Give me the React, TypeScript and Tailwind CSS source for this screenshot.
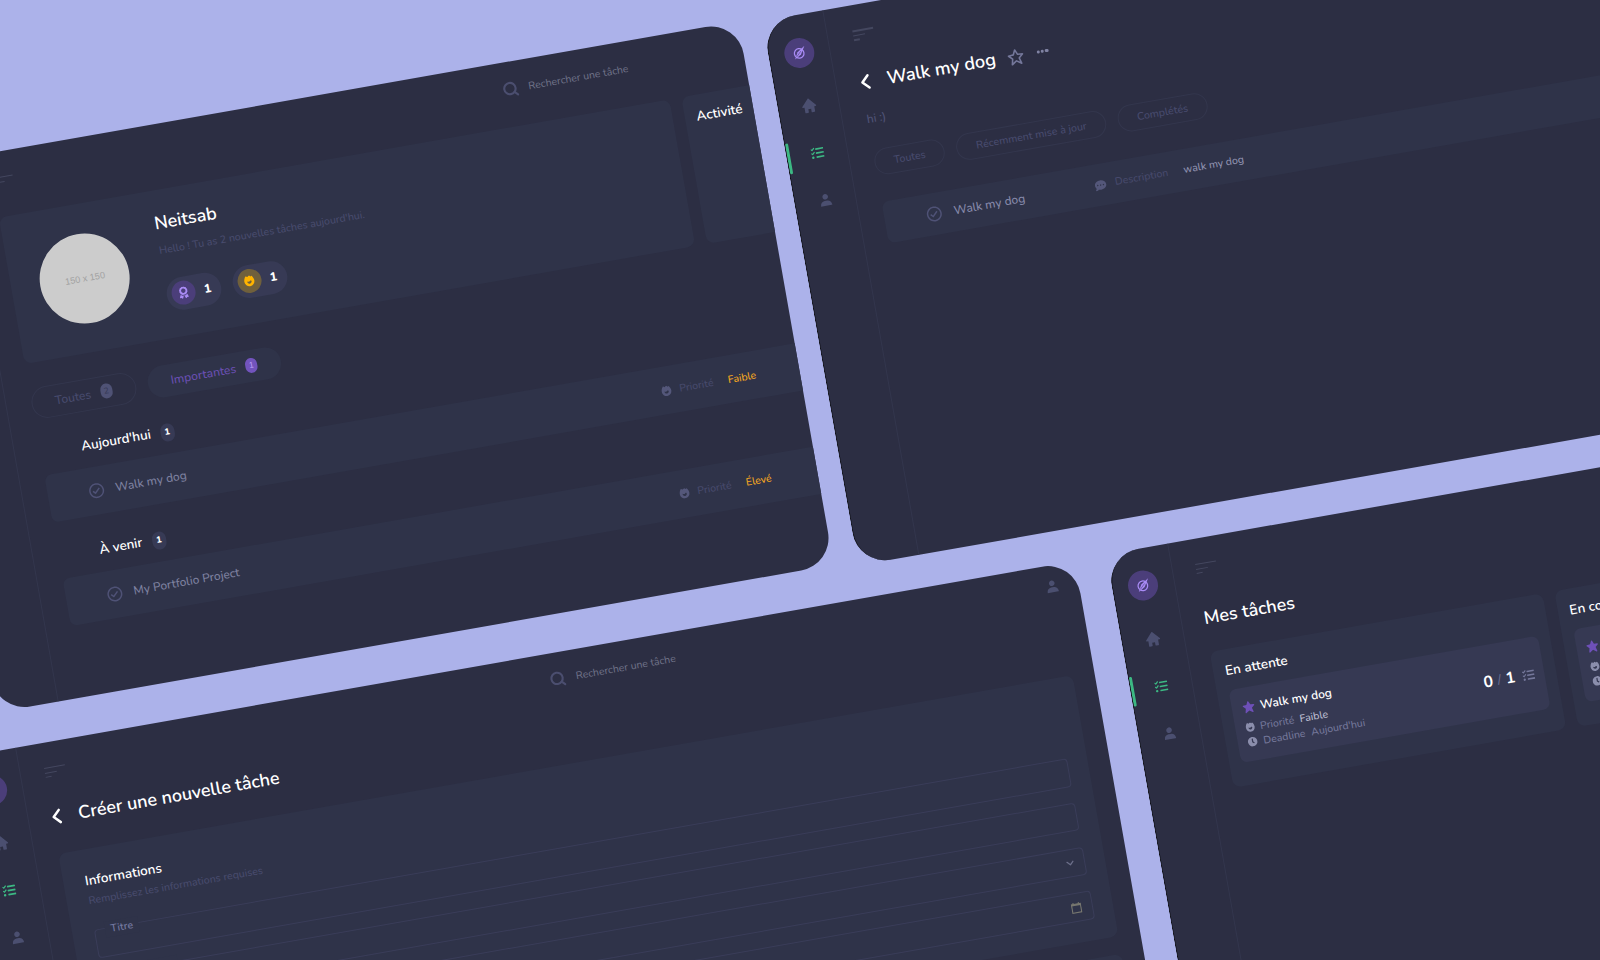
import type { ReactNode } from "react";
import { BiCheckCircle, BiSolidHome, BiSolidStar, BiSolidUser, BiStar } from "react-icons/bi";
import { FaAward, FaClock, FaCommentDots, FaTasks } from "react-icons/fa";
import { ChevronDown, Search } from "lucide-react";

function LogoMark() {
  return (
    <svg width="16" height="16" viewBox="0 0 14 14" fill="none">
      <circle cx="6.8" cy="7.3" r="4.2" stroke="#a98bf5" strokeWidth="1.1" />
      <path d="M12.4 1.6 L8.2 8.6 L2.4 12 L5.600 6 Z" fill="#a98bf5" />
      <path d="M4.1 10 L8.6 5.600" stroke="#4b3e7a" strokeWidth="0.5" />
    </svg>
  );
}

function Flame({ size, className = "" }: { size: number; className?: string }) {
  return (
    <svg width={size} height={size} viewBox="0 0 24 24" fill="currentColor" fillRule="evenodd" className={`shrink-0 ${className}`}>
      <path d="M5.4 1.8C7 2 8.2 2.600 9.400 3.700 10.700 2.400 12 1.500 13.400 1.200c1 .8 1.800 1.600 2.500 2.500.8-.6 1.500-1 2.400-1.200C21 5.600 22.600 9.400 22.600 13a10.600 10.600 0 0 1-21.200 0C1.400 8.900 3 4.800 5.400 1.800ZM7.500 12.800c-.3 3.200 1.700 5.400 4.500 5.400s5-2.200 4.600-5.200c-.9-1-1.800-1.300-2.700-1-.7.4-1.100 1.100-1.900 1.800-1.400.2-2.900-.1-4.500-1Z" />
    </svg>
  );
}

function Sidebar() {
  return (
    <aside className="flex w-[61.3px] shrink-0 flex-col items-center border-r border-[#33364d] pt-[22.6px] text-[#4b4f70]">
      <div className="mb-[14.6px] flex size-[30px] items-center justify-center rounded-full bg-[#4b3e7a]">
        <LogoMark />
      </div>
      <div className="flex h-[48.2px] items-center">
        <BiSolidHome size={17} />
      </div>
      <div className="relative flex h-[48.2px] w-full items-center justify-center text-[#3cb883]">
        <span className="absolute left-0 top-[9.8px] h-[30.5px] w-[3px] rounded-[2px] bg-[#3cb883]" />
        <FaTasks size={13} />
      </div>
      <div className="flex h-[48.2px] items-center">
        <BiSolidUser size={15} />
      </div>
    </aside>
  );
}

function MenuIcon() {
  return (
    <div className="flex flex-col gap-[3.3px]">
      <span className="h-[1.2px] w-[21px] bg-[#44475f]" />
      <span className="h-[1.2px] w-[12px] bg-[#44475f]" />
      <span className="h-[1.2px] w-[6px] bg-[#44475f]" />
    </div>
  );
}

function SearchBox() {
  return (
    <div className="flex items-center text-[10.5px] leading-4 text-[#707389]">
      <Search size={17} strokeWidth={3} className="mr-[9.8px] text-[#4b4e6f]" />
      <span className="pt-px">Rechercher une tâche</span>
    </div>
  );
}

function BackArrow() {
  return (
    <svg width="10" height="16" viewBox="0 0 10 16" fill="none" className="mr-[17px] -ml-[1px]">
      <path d="M8.2 1.8 L2 8 L8.2 14.2" stroke="#fff" strokeWidth="2.5" strokeLinecap="round" strokeLinejoin="round" />
    </svg>
  );
}

function Window({ place, children }: { place: string; children: ReactNode }) {
  return (
    <section className={`absolute flex h-[552.4px] overflow-hidden rounded-[33px] bg-[#2c2e43] ${place}`}>
      <Sidebar />
      {children}
    </section>
  );
}

function DashboardRow({ title, priority }: { title: string; priority: string }) {
  return (
    <div className="flex h-[47.8px] w-[1000px] items-center rounded-[7px] bg-[#2f3349] pl-[40.2px]">
      <BiCheckCircle size={18} className="mr-[10.3px] text-[#4f5276]" />
      <div className="w-[554.2px] text-[12px] font-medium text-[#7e81a0]">{title}</div>
      <Flame size={11} className="mr-[7.5px] text-[#54577a]" />
      <span className="mr-[14.800px] pt-[0.5px] text-[10.5px] font-medium text-[#474a6c]">Priorité</span>
      <span className="pt-[0.5px] text-[10.5px] font-medium text-[#f5a81f]">{priority}</span>
    </div>
  );
}

function GroupHeader({ label }: { label: string }) {
  return (
    <div className="mt-[24.2px] mb-[12.4px] ml-[42px] flex h-5 items-center text-[13.4px] font-semibold text-white">
      <span className="pt-[1px]">{label}</span>
      <span className="mt-[2.5px] ml-[9.8px] flex h-[18px] w-[14px] items-center justify-center rounded-full bg-[#373a55] text-[9px] font-extrabold">
        1
      </span>
    </div>
  );
}

function Dashboard() {
  return (
    <Window place="left-[-125.6px] top-[148.6px] w-[848.2px]">
      <div className="w-0 grow pl-[24.8px]">
        <div className="flex h-[65.7px] items-start">
          <div className="mt-[25.5px]">
            <MenuIcon />
          </div>
          <div className="mt-[19px] ml-[497.2px]">
            <SearchBox />
          </div>
        </div>
        <div className="flex w-[1100px] gap-[12px]">
          <div className="flex h-[149.2px] w-[681.5px] items-start rounded-[8px] bg-[#2f3349] pl-[29.4px]">
            <div className="mt-[29.5px] mr-[33.3px] flex size-[90px] items-center justify-center rounded-full bg-[#cccccc] pt-[2px] pl-[1px] font-['Liberation_Sans'] text-[9.200px] text-[#a2a2a2]">
              150 x 150
            </div>
            <div className="pt-[20.4px]">
              <div className="text-[18px] leading-6 font-semibold text-white">Neitsab</div>
              <div className="mt-[8.4px] text-[10.56px] leading-4 font-medium text-[#484b6d]">
                Hello ! Tu as 2 nouvelles tâches aujourd'hui.
              </div>
              <div className="mt-[20.5px] flex gap-[11.5px] text-[12px] font-extrabold text-white">
                <div className="flex h-[33px] w-[55.3px] items-center rounded-full bg-[#373a55] pl-[5px]">
                  <span className="mr-[8.6px] flex size-6 items-center justify-center rounded-full bg-[#4b3e7a] text-[#a98bf5]">
                    <FaAward size={12} />
                  </span>
                  1
                </div>
                <div className="flex h-[33px] w-[55.3px] items-center rounded-full bg-[#373a55] pl-[5px]">
                  <span className="mr-[8.6px] flex size-6 items-center justify-center rounded-full bg-[#70603c] text-[#ffb400]">
                    <Flame size={11.5} />
                  </span>
                  1
                </div>
              </div>
            </div>
          </div>
          <div className="h-[149.2px] w-[300px] rounded-[8px] bg-[#2f3349] pt-[12.2px] pl-[11.800px] text-[13.4px] leading-5 font-semibold text-white">
            Activité
          </div>
        </div>
        <div className="mt-[24.1px] flex h-[32.2px] gap-[11.6px] text-[12.05px] font-medium">
          <div className="flex items-center rounded-full border border-[#33364d] px-[23.2px] text-[#484b6e]">
            Toutes
            <span className="ml-[9.6px] flex h-[15.500px] w-[12px] items-center justify-center rounded-full bg-[#4f5275] text-[8.5px] text-[#383b58]">
              2
            </span>
          </div>
          <div className="flex items-center rounded-full bg-[#2f3349] px-[23.700px] text-[#6a4fb2]">
            Importantes
            <span className="ml-[9.6px] flex h-[15.500px] w-[12px] items-center justify-center rounded-full bg-[#7254bd] text-[8.5px] text-[#b79df5]">
              1
            </span>
          </div>
        </div>
        <GroupHeader label="Aujourd'hui" />
        <DashboardRow title="Walk my dog" priority="Faible" />
        <GroupHeader label="À venir" />
        <DashboardRow title="My Portfolio Project" priority="Élevé" />
      </div>
    </Window>
  );
}

function FilterPill({ children }: { children: string }) {
  return (
    <div className="flex h-[27.5px] items-center rounded-full border border-[#33364d] px-[18.7px] text-[10.65px] font-medium text-[#484b6e]">
      {children}
    </div>
  );
}

function TaskDetail() {
  return (
    <Window place="left-[747.2px] top-[153.2px] w-[1136px] border-l border-[#101118]">
      <div className="grow pl-[24.4px]">
        <div className="h-[60.2px] pt-[25.3px]">
          <MenuIcon />
        </div>
        <div className="flex h-[35.6px] items-center text-[18.200px] font-semibold text-white">
          <BackArrow />
          <span className="pt-[1.2px]">Walk my dog</span>
          <BiStar size={19} className="mt-[2.2px] ml-[10.800px] text-[#74779a]" />
          <div className="mt-[0.5px] ml-[11.5px] flex gap-[1px]">
            <span className="size-[3.4px] rounded-full bg-[#8083a3]" />
            <span className="size-[3.4px] rounded-full bg-[#8083a3]" />
            <span className="size-[3.4px] rounded-full bg-[#8083a3]" />
          </div>
        </div>
        <div className="mt-[11.2px] -ml-px text-[12px] leading-4 font-medium text-[#505377]">hi :)</div>
        <div className="mt-[22.600px] -ml-px flex gap-[12px]">
          <FilterPill>Toutes</FilterPill>
          <FilterPill>Récemment mise à jour</FilterPill>
          <FilterPill>Complétés</FilterPill>
        </div>
        <div className="mt-[26.2px] -ml-[1.2px] flex h-[41.8px] items-center rounded-[7px] bg-[#2f3349] pl-[41.6px]">
          <BiCheckCircle size={18} className="mr-[10.5px] text-[#4f5276]" />
          <div className="w-[143.6px] text-[12px] font-medium text-[#8689a9]">Walk my dog</div>
          <FaCommentDots size={11.5} className="mr-[8.5px] text-[#54577a]" />
          <span className="mr-[15.6px] text-[10.5px] font-medium text-[#474a6c]">Description</span>
          <span className="text-[10.56px] font-medium text-[#8f92b0]">walk my dog</span>
        </div>
      </div>
    </Window>
  );
}

function CalendarIcon() {
  return (
    <svg width="11" height="12" viewBox="0 0 11 12" fill="none" stroke="#77776f" strokeWidth="1.1">
      <path d="M1 2.2h9v8.6h-9z" />
      <path d="M1 3h9" strokeWidth="1.8" />
      <path d="M2.8 0.6v1.6M8.2 0.6v1.6" />
    </svg>
  );
}

function Field({ label, icon }: { label: string; icon?: ReactNode }) {
  return (
    <div className="relative flex h-[28.4px] items-center justify-end rounded-[4px] border border-[#3a3d59] pr-[9.5px]">
      <span className="absolute -top-[7.5px] left-[10.3px] bg-[#2f3349] px-[5.6px] text-[10.5px] leading-4 font-semibold text-[#7478a0]">
        {label}
      </span>
      {icon}
    </div>
  );
}

function CreateTask() {
  return (
    <Window place="left-[-175.2px] top-[739px] w-[1136.5px]">
      <div className="w-0 grow pr-[22px] pl-[24px]">
        <div className="flex h-[57.6px] items-start">
          <div className="mt-[25.3px]">
            <MenuIcon />
          </div>
          <div className="mt-[18.2px] ml-[491.9px]">
            <SearchBox />
          </div>
          <BiSolidUser size={15} className="mt-[13.8px] mr-[-2.5px] ml-auto text-[#4b4f70]" />
        </div>
        <div className="flex h-[35.6px] items-center text-[18px] font-semibold text-white">
          <BackArrow />
          <span className="-ml-[0.3px] pt-[1px]">Créer une nouvelle tâche</span>
        </div>
        <div className="mt-[19.2px] -ml-[1px] h-[264.8px] rounded-[8px] bg-[#2f3349] pt-[21.4px] pr-[20.5px] pl-[21.700px]">
          <div className="text-[13.5px] leading-5 font-semibold text-white">Informations</div>
          <div className="mt-[2.6px] mb-[21px] text-[10.6px] leading-4 font-medium text-[#484b6d]">
            Remplissez les informations requises
          </div>
          <div className="flex flex-col gap-[16.3px]">
            <Field label="Titre" />
            <Field label="Description" />
            <Field label="Priorité" icon={<ChevronDown size={12} strokeWidth={2.6} className="-mr-[1.5px] text-[#6c6f8a]" />} />
            <Field label="Deadline" icon={<CalendarIcon />} />
          </div>
        </div>
        <div className="mt-[17.6px] -ml-[1px] h-[200px] rounded-[8px] bg-[#2f3349]" />
      </div>
    </Window>
  );
}

function TaskCard({ title, priority, deadline }: { title: string; priority: string; deadline: string }) {
  return (
    <div className="flex h-[74px] w-[314px] items-center justify-between rounded-[7px] bg-[#363953] pr-[10px] pl-[9.5px]">
      <div className="pt-[1px] text-[10.5px] leading-[15px] font-medium text-[#74779a]">
        <div className="mb-[5.2px] flex items-center gap-[4.8px] text-[12px] font-semibold text-white">
          <BiSolidStar size={14} className="text-[#6e50b8]" />
          {title}
        </div>
        <div className="flex items-center">
          <Flame size={10} className="mr-[5px] ml-[0.5px] text-[#8b8eac]" />
          Priorité
          <span className="ml-[5.7px] text-[#bcbed1]">{priority}</span>
        </div>
        <div className="flex items-center">
          <FaClock size={9.8} className="mr-[5.5px] ml-[0.8px] text-[#8b8eac]" />
          Deadline
          <span className="ml-[6px]">{deadline}</span>
        </div>
      </div>
      <div className="flex items-center text-[16px] font-bold text-white">
        0<span className="mx-[4.5px] text-[13px] font-medium text-[#6b6e92]">/</span>1
        <FaTasks size={12.5} className="ml-[7px] text-[#74779a]" />
      </div>
    </div>
  );
}

function Column({ label, children }: { label: string; children: ReactNode }) {
  return (
    <div className="h-[138px] w-[338.2px] shrink-0 rounded-[8px] bg-[#2f3349] px-[12px] pt-[12.2px]">
      <div className="mb-[9.4px] text-[13.5px] leading-5 font-semibold text-white">{label}</div>
      {children}
    </div>
  );
}

function Board() {
  return (
    <Window place="left-[993.3px] top-[737.8px] w-[1136px] border-l border-[#101118]">
      <div className="grow pl-[23.7px]">
        <div className="h-[68.4px] pt-[25.3px]">
          <MenuIcon />
        </div>
        <div className="-ml-px text-[18px] leading-6 font-semibold text-white">Mes tâches</div>
        <div className="mt-[21.5px] -ml-[1.2px] flex gap-[11.5px]">
          <Column label="En attente">
            <TaskCard title="Walk my dog" priority="Faible" deadline="Aujourd'hui" />
          </Column>
          <Column label="En cours">
            <TaskCard title="My Portfolio Project" priority="Élevé" deadline="Demain" />
          </Column>
        </div>
      </div>
    </Window>
  );
}

export default function App() {
  return (
    <main className="relative h-[960px] w-[1600px] overflow-hidden bg-[#acb2ea] font-['Nunito','Lato',sans-serif] whitespace-nowrap">
      <div className="absolute left-0 top-0 size-0 origin-top-left -rotate-10">
        <Dashboard />
        <TaskDetail />
        <CreateTask />
        <Board />
      </div>
    </main>
  );
}
